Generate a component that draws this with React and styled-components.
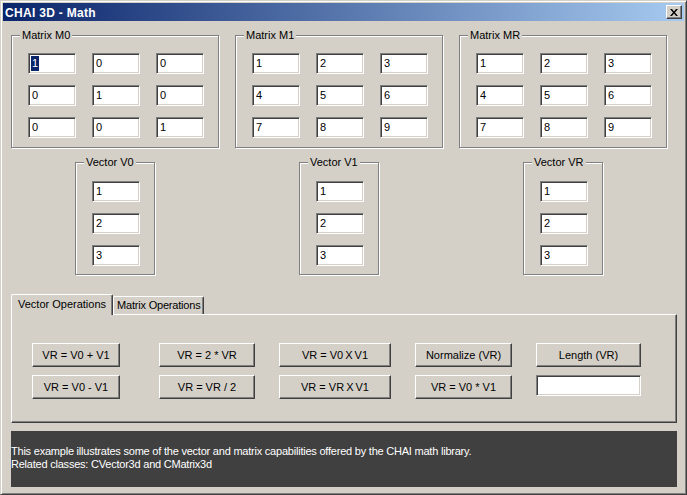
import React from "react";
import styled, { createGlobalStyle } from "styled-components";

// CHAI 3D math demo dialog, win2k classic look

const GlobalStyle = createGlobalStyle`
  html, body {
    margin: 0;
    padding: 0;
    background: #d4d0c8;
  }
  body {
    font-family: "Liberation Sans", Arial, sans-serif;
    font-size: 11px;
    color: #000;
  }
`;

const matrices = [
  { title: "Matrix M0", values: ["1", "0", "0", "0", "1", "0", "0", "0", "1"] },
  { title: "Matrix M1", values: ["1", "2", "3", "4", "5", "6", "7", "8", "9"] },
  { title: "Matrix MR", values: ["1", "2", "3", "4", "5", "6", "7", "8", "9"] },
];

const vectors = ["Vector V0", "Vector V1", "Vector VR"];

const buttons = [
  ["VR = V0 + V1", "VR = 2 * VR", "VR = V0 X V1", "Normalize (VR)", "Length (VR)"],
  ["VR = V0 - V1", "VR = VR / 2", "VR = VR X V1", "VR = V0 * V1", null],
];

const App = () => {
  return (
    <>
      <GlobalStyle />
      <Window>
        <TitleBar>
          <Title>CHAI 3D - Math</Title>
          <CloseButton>
            <svg width="8" height="7" viewBox="0 0 8 7">
              <path d="M0 0h2l2 2.5L6 0h2L5 3.5 8 7H6L4 4.5 2 7H0l3-3.5z" fill="#000" />
            </svg>
          </CloseButton>
        </TitleBar>
        <Client>
          <GroupRow>
            {matrices.map((m, mi) => (
              <MatrixGroup key={m.title}>
                <Legend>{m.title}</Legend>
                <MatrixGrid>
                  {m.values.map((v, i) => (
                    <Edit key={i}>
                      {mi === 0 && i === 0 ? <Selected>{v}</Selected> : v}
                    </Edit>
                  ))}
                </MatrixGrid>
              </MatrixGroup>
            ))}
          </GroupRow>
          <GroupRow>
            {vectors.map((title) => (
              <VectorCell key={title}>
                <VectorGroup>
                  <Legend>{title}</Legend>
                  <VectorStack>
                    <Edit>1</Edit>
                    <Edit>2</Edit>
                    <Edit>3</Edit>
                  </VectorStack>
                </VectorGroup>
              </VectorCell>
            ))}
          </GroupRow>
          <Tabs>
            <TabStrip>
              <Tab active>Vector Operations</Tab>
              <Tab>Matrix Operations</Tab>
            </TabStrip>
            <TabPanel>
              <ButtonGrid>
                {buttons.flat().map((label, i) =>
                  label ? (
                    <Button key={i} first={i % 5 === 0}>
                      {label.includes(" X ") ? (
                        <>
                          {label.split(" X ")[0]}
                          <Cross>X</Cross>
                          {label.split(" X ")[1]}
                        </>
                      ) : (
                        label
                      )}
                    </Button>
                  ) : (
                    <ResultEdit key={i} />
                  )
                )}
              </ButtonGrid>
            </TabPanel>
          </Tabs>
          <Info>
            This example illustrates some of the vector and matrix capabilities offered by the CHAI math library.
            <br />
            Related classes: CVector3d and CMatrix3d
          </Info>
        </Client>
      </Window>
    </>
  );
};

export default App;

const Window = styled.div`
  width: 687px;
  height: 495px;
  box-sizing: border-box;
  border: 1px solid;
  border-color: #d4d0c8 #404040 #404040 #d4d0c8;
  box-shadow: inset 1px 1px #fff, inset -1px -1px #808080;
  padding: 2px;
  display: flex;
  flex-direction: column;
  background: #d4d0c8;
  overflow: hidden;
`;

const TitleBar = styled.div`
  height: 18px;
  flex: none;
  display: flex;
  align-items: center;
  justify-content: space-between;
  padding: 0 2px 0 2px;
  background: linear-gradient(to right, #0a246a, #a6caf0);
`;

const Title = styled.div`
  color: #fff;
  font-weight: bold;
  font-size: 12px;
  font-family: "Liberation Sans", Arial, sans-serif;
  letter-spacing: 0.3px;
  padding-top: 1px;
`;

const CloseButton = styled.div`
  width: 16px;
  height: 14px;
  box-sizing: border-box;
  background: #d4d0c8;
  border: 1px solid;
  border-color: #fff #404040 #404040 #fff;
  box-shadow: inset -1px -1px #808080;
  display: flex;
  align-items: center;
  justify-content: center;
`;

const Client = styled.div`
  flex: 1;
  display: flex;
  flex-direction: column;
  padding: 14px 0 0 8px;
`;

const GroupRow = styled.div`
  display: grid;
  grid-template-columns: repeat(3, 208px);
  column-gap: 16px;
  & + & {
    margin-top: 14px;
  }
`;

const GroupBox = styled.div`
  position: relative;
  box-sizing: border-box;
  border: 1px solid #808080;
  box-shadow: inset 1px 1px #fff, 1px 1px #fff;
`;

const MatrixGroup = styled(GroupBox)`
  height: 113px;
  padding: 17px 0 0 16px;
`;

const Legend = styled.span`
  position: absolute;
  top: -7px;
  left: 8px;
  padding: 0 2px;
  background: #d4d0c8;
  line-height: 13px;
`;

const MatrixGrid = styled.div`
  display: grid;
  grid-template-columns: repeat(3, 48px);
  column-gap: 16px;
  row-gap: 11px;
`;

const VectorCell = styled.div`
  display: flex;
  justify-content: center;
`;

const VectorGroup = styled(GroupBox)`
  width: 80px;
  height: 113px;
  padding: 18px 0 0 16px;
`;

const VectorStack = styled.div`
  display: flex;
  flex-direction: column;
  gap: 11px;
  width: 48px;
`;

const Edit = styled.div`
  height: 21px;
  box-sizing: border-box;
  background: #fff;
  border: 1px solid;
  border-color: #808080 #fff #fff #808080;
  box-shadow: inset 1px 1px #404040, inset -1px -1px #d4d0c8;
  padding: 0 0 0 3px;
  display: flex;
  align-items: center;
  line-height: 15px;
`;

const Selected = styled.span`
  background: #0a246a;
  color: #fff;
  margin-left: -1px;
  padding: 0 1px;
`;

const Tabs = styled.div`
  margin-top: 19px;
  width: 666px;
  display: flex;
  flex-direction: column;
`;

const TabStrip = styled.div`
  display: flex;
  align-items: flex-end;
  height: 20px;
  padding-left: 2px;
  position: relative;
  z-index: 1;
`;

const Tab = styled.div`
  box-sizing: border-box;
  height: ${(p) => (p.active ? "21px" : "18px")};
  margin: ${(p) => (p.active ? "0 -1px -1px -2px" : "0 0 0 1px")};
  padding: ${(p) => (p.active ? "2px 6px 0 6px" : "1px 3px 0 3px")};
  background: #d4d0c8;
  border-top: 1px solid #fff;
  border-left: 1px solid #fff;
  border-right: 1px solid #404040;
  border-radius: 2px 2px 0 0;
  box-shadow: inset -1px 0 #808080;
  line-height: 14px;
  letter-spacing: ${(p) => (p.active ? "0" : "-0.2px")};
  white-space: nowrap;
`;

const TabPanel = styled.div`
  height: 109px;
  box-sizing: border-box;
  border: 1px solid;
  border-color: #fff #404040 #404040 #fff;
  box-shadow: inset -1px -1px #808080;
  padding: 28px 0 0 20px;
`;

const ButtonGrid = styled.div`
  display: grid;
  grid-template-columns: 103px 96px 112px 97px 105px;
  column-gap: 24px;
  row-gap: 8px;
  align-items: start;
`;

const Button = styled.div`
  width: ${(p) => (p.first ? "88px" : "auto")};
  height: 24px;
  box-sizing: border-box;
  background: #d4d0c8;
  border: 1px solid;
  border-color: #fff #404040 #404040 #fff;
  box-shadow: inset -1px -1px #808080;
  display: flex;
  align-items: center;
  justify-content: center;
  white-space: nowrap;
`;

const Cross = styled.span`
  margin: 0 2px;
`;

const ResultEdit = styled(Edit)`
  height: 21px;
`;

const Info = styled.div`
  margin-top: 8px;
  width: 666px;
  height: 56px;
  box-sizing: border-box;
  background: #404040;
  color: #fff;
  padding-top: 14px;
  line-height: 13px;
  letter-spacing: -0.22px;
`;
